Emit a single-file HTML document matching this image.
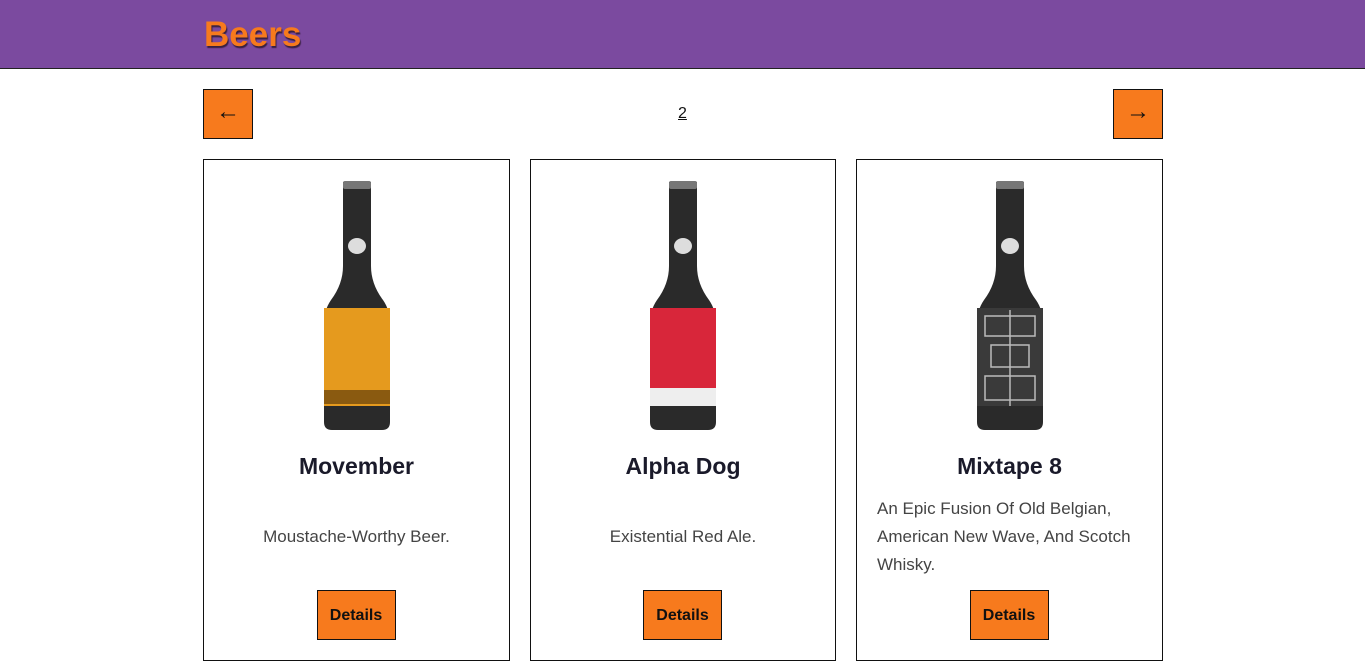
<!DOCTYPE html>
<html><head><style>
*{box-sizing:border-box;margin:0;padding:0}
body{width:1365px;height:665px;overflow:hidden;background:#fff;font-family:"Liberation Sans",sans-serif;color:#111}
.hdr{height:69px;background:#7b4a9f;border-bottom:1px solid #222;position:relative}
.hdr h1{position:absolute;left:204px;top:15px;font-size:35px;font-weight:bold;color:#f77a1d;text-shadow:1px 2px 1px #3a2040}
.btn{position:absolute;background:#f77a1d;border:1px solid #111;display:flex;align-items:center;justify-content:center}
.arr{font-size:24px;padding-bottom:5px}
.pg{position:absolute;left:678px;top:105px;font-size:16px;text-decoration:underline}
.card{position:absolute;top:159px;height:502px;border:1px solid #111;text-align:center}
.card h2{position:absolute;top:293px;left:0;right:0;font-size:23px;font-weight:bold;color:#1a1a2a}
.card p{position:absolute;left:20px;right:20px;font-size:17px;color:#444;line-height:28px}
.card svg{position:absolute;top:20px;left:50%;margin-left:-33px}
.det{position:absolute;top:430px;left:50%;margin-left:-40px;width:79px;height:50px;font-size:16px;font-weight:bold;padding-top:2px}
</style></head><body>
<div class="hdr"><h1>Beers</h1></div>
<div class="btn arr" style="left:203px;top:89px;width:50px;height:50px">&larr;</div>
<div class="pg">2</div>
<div class="btn arr" style="left:1113px;top:89px;width:50px;height:50px">&rarr;</div>

<div class="card" style="left:203px;width:307px">
<svg width="66" height="252" viewBox="0 0 66 252"><path d="M19 2h28v84q0 18 12 34q7 10 7 24v98q0 8-8 8h-50q-8 0-8-8v-98q0-14 7-24q12-16 12-34z" fill="#2a2a2a"/><rect x="19" y="1" width="28" height="8" rx="2" fill="#777"/><ellipse cx="33" cy="66" rx="9" ry="8" fill="#ddd"/><rect x="0" y="128" width="66" height="98" fill="#e59a1e"/><rect x="0" y="210" width="66" height="14" fill="#8a5a10"/></svg>
<h2>Movember</h2><p style="top:363px">Moustache-Worthy Beer.</p>
<div class="btn det">Details</div></div>

<div class="card" style="left:530px;width:306px">
<svg width="66" height="252" viewBox="0 0 66 252"><path d="M19 2h28v84q0 18 12 34q7 10 7 24v98q0 8-8 8h-50q-8 0-8-8v-98q0-14 7-24q12-16 12-34z" fill="#2a2a2a"/><rect x="19" y="1" width="28" height="8" rx="2" fill="#777"/><ellipse cx="33" cy="66" rx="9" ry="8" fill="#ddd"/><rect x="0" y="128" width="66" height="98" fill="#d8263a"/><rect x="0" y="208" width="66" height="18" fill="#eee"/></svg>
<h2>Alpha Dog</h2><p style="top:363px">Existential Red Ale.</p>
<div class="btn det">Details</div></div>

<div class="card" style="left:856px;width:307px">
<svg width="66" height="252" viewBox="0 0 66 252"><path d="M19 2h28v84q0 18 12 34q7 10 7 24v98q0 8-8 8h-50q-8 0-8-8v-98q0-14 7-24q12-16 12-34z" fill="#2a2a2a"/><rect x="19" y="1" width="28" height="8" rx="2" fill="#777"/><ellipse cx="33" cy="66" rx="9" ry="8" fill="#ddd"/><rect x="0" y="128" width="66" height="98" fill="#3a3a3a"/><g stroke="#bbb" stroke-width="1.5" fill="none"><rect x="8" y="136" width="50" height="20"/><rect x="14" y="165" width="38" height="22"/><rect x="8" y="196" width="50" height="24"/><path d="M33 130v96"/></g></svg>
<h2>Mixtape 8</h2><p style="top:335px;text-align:left">An Epic Fusion Of Old Belgian, American New Wave, And Scotch Whisky.</p>
<div class="btn det">Details</div></div>
</body></html>
